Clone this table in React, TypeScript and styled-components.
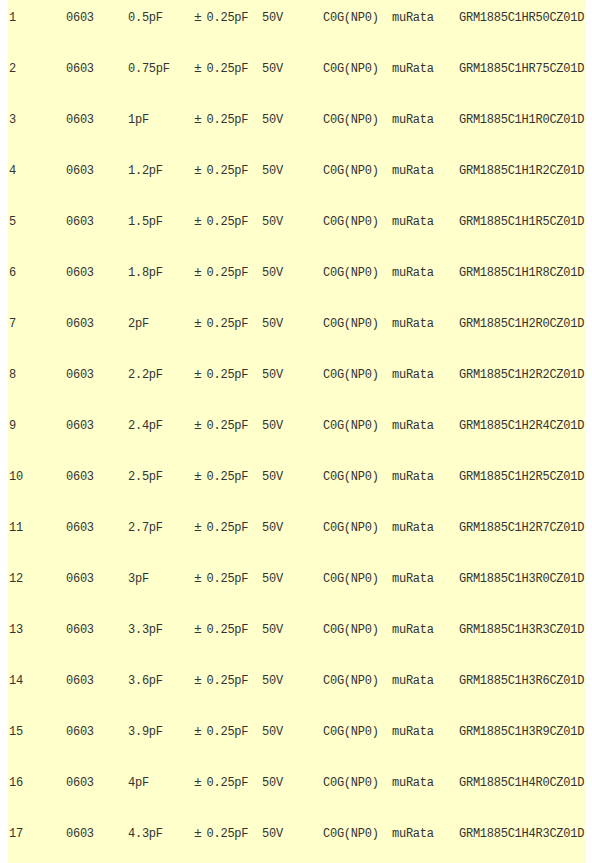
import styled, { createGlobalStyle } from 'styled-components'

const GlobalStyle = createGlobalStyle`
  html, body {
    margin: 0;
    padding: 0;
    background: #ffffff;
  }
`

const parts: [string, string][] = [
  ['0.5pF', 'HR50'],
  ['0.75pF', 'HR75'],
  ['1pF', 'H1R0'],
  ['1.2pF', 'H1R2'],
  ['1.5pF', 'H1R5'],
  ['1.8pF', 'H1R8'],
  ['2pF', 'H2R0'],
  ['2.2pF', 'H2R2'],
  ['2.4pF', 'H2R4'],
  ['2.5pF', 'H2R5'],
  ['2.7pF', 'H2R7'],
  ['3pF', 'H3R0'],
  ['3.3pF', 'H3R3'],
  ['3.6pF', 'H3R6'],
  ['3.9pF', 'H3R9'],
  ['4pF', 'H4R0'],
  ['4.3pF', 'H4R3'],
]

const App = () => {
  return (
    <>
      <GlobalStyle />
      <Sheet>
        {parts.map(([value, code], i) => (
          <Row key={code}>
            <Cell>{i + 1}</Cell>
            <Cell>0603</Cell>
            <Cell>{value}</Cell>
            <Cell>
              <Wide>±</Wide>0.25pF
            </Cell>
            <Cell>50V</Cell>
            <Cell>C0G(NP0)</Cell>
            <Cell>muRata</Cell>
            <Cell>GRM1885C1{code}CZ01D</Cell>
          </Row>
        ))}
      </Sheet>
    </>
  )
}

const Sheet = styled.div`
  margin-left: 8px;
  width: 578px;
  height: 863px;
  overflow: hidden;
  background: #ffffcc;
`

const Row = styled.div`
  display: grid;
  grid-template-columns: 57px 62px 66px 68px 61px 69px 67px 1fr;
  height: 51px;
  box-sizing: border-box;
  padding: 10px 0 0 1px;
`

const Cell = styled.div`
  font-family: 'Liberation Mono', 'Noto Sans CJK SC', monospace;
  font-size: 12px;
  letter-spacing: -0.25px;
  line-height: 16px;
  height: 16px;
  color: #333333;
  white-space: nowrap;
`

const Wide = styled.span`
  margin-right: 5px;
  font-size: 13px;
`

export default App
